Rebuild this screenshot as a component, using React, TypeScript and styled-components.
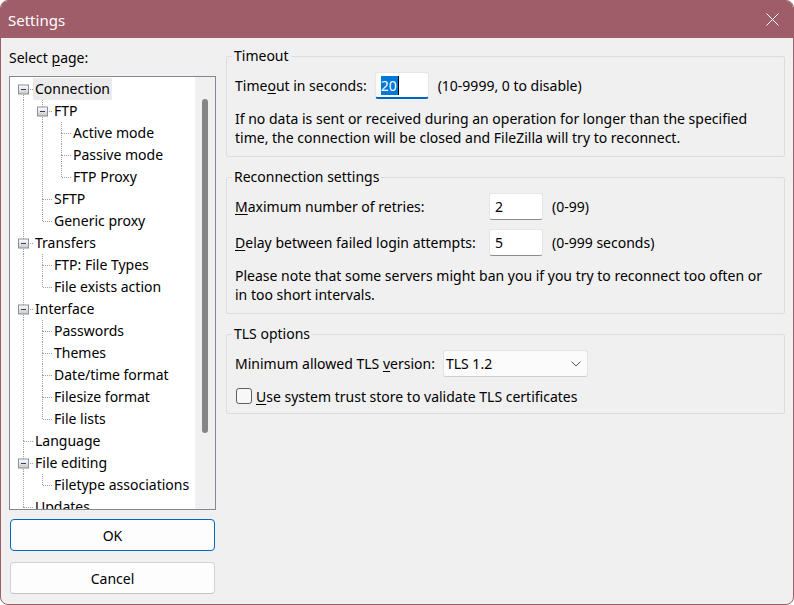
import React from 'react';
import styled, { createGlobalStyle } from 'styled-components';

const GlobalStyle = createGlobalStyle`
  html, body { margin: 0; padding: 0; background: #ffffff; }
  body {
    font-family: "Noto Sans", "DejaVu Sans", sans-serif;
    font-size: 14px;
    color: #000;
  }
  * { box-sizing: border-box; }
`;

const Window = styled.div`
  width: 794px;
  height: 605px;
  border: 1px solid #9f5d69;
  border-radius: 8px;
  overflow: hidden;
  background: #f0f0f0;
  display: flex;
  flex-direction: column;
`;

const TitleBar = styled.div`
  height: 37px;
  flex: none;
  background: #9f5d69;
  color: #fff;
  display: flex;
  align-items: center;
  justify-content: space-between;
  padding: 0 14px 0 7px;
  font-size: 15px;
`;

const CloseIcon = styled.svg`
  width: 13px;
  height: 13px;
  display: block;
`;

const Body = styled.div`
  flex: 1;
  display: flex;
  gap: 10px;
  padding: 9px 8px 10px 8px;
  min-height: 0;
`;

const LeftCol = styled.div`
  width: 207px;
  flex: none;
  display: flex;
  flex-direction: column;
  padding-top: 1px;
`;

const SelectLabel = styled.div`
  line-height: 20px;
  margin-bottom: 8px;
`;

const TreeBox = styled.div`
  flex: 1;
  min-height: 0;
  border: 1px solid #828790;
  background: #fff;
  display: flex;
  overflow: hidden;
  margin-bottom: 9px;
`;

const TreeList = styled.div`
  flex: 1;
  overflow: hidden;
  padding: 1px 0 0 4px;
`;

const ScrollTrack = styled.div`
  width: 20px;
  flex: none;
  background: #f0f0f0;
  padding: 22px 0 0 7px;
`;

const ScrollThumb = styled.div`
  width: 6px;
  height: 334px;
  border-radius: 3px;
  background: #858585;
`;

const TreeRow = styled.div`
  height: 22px;
  display: flex;
  align-items: center;
  white-space: nowrap;
`;

const TreeCell = styled.svg`
  width: 19px;
  height: 22px;
  flex: none;
  display: block;
`;

const TreeLabel = styled.span<{ $selected?: boolean }>`
  padding: 0 2px;
  line-height: 22px;
  background: ${(p) => (p.$selected ? '#ebebeb' : 'transparent')};
`;

const Button = styled.button<{ $default?: boolean }>`
  height: 32px;
  flex: none;
  margin: 0 1px;
  border-radius: 4px;
  border: 1px solid ${(p) => (p.$default ? '#0067c0' : '#d3d3d3')};
  border-bottom-color: ${(p) => (p.$default ? '#0067c0' : '#c2c2c2')};
  background: #fdfdfd;
  font-family: inherit;
  font-size: 14px;
  color: #000;
  padding: 0;
  & + & { margin-top: 11px; }
`;

const RightCol = styled.div`
  flex: 1;
  display: flex;
  flex-direction: column;
  gap: 11px;
  min-width: 0;
`;

const Group = styled.fieldset<{ $pb?: number }>`
  margin: 0;
  padding: 7px 8px ${(p) => p.$pb ?? 9}px 8px;
  border: 1px solid #dcdcdc;
  border-radius: 2px;
  min-width: 0;
`;

const Legend = styled.legend`
  padding: 0 2px;
  margin-left: -3px;
  line-height: 18px;
`;

const Row = styled.div`
  display: flex;
  align-items: center;
  gap: 8px;
  height: 27px;
`;

const FieldGrid = styled.div`
  display: grid;
  grid-template-columns: 246px 54px auto;
  grid-auto-rows: 27px;
  column-gap: 8px;
  row-gap: 9px;
  align-items: center;
  justify-content: start;
`;

const TextBox = styled.div<{ $focused?: boolean }>`
  width: 54px;
  height: 27px;
  background: #fff;
  border: 1px solid #e6e6e6;
  border-bottom: ${(p) => (p.$focused ? '2px solid #0067c0' : '1px solid #8c8c8c')};
  border-radius: 3px;
  padding-left: 5px;
  display: flex;
  align-items: center;
`;

const Selected = styled.span`
  background: #0078d7;
  color: #fff;
  line-height: 19px;
  padding: 0 1px 0 0;
`;

const Caret = styled.span`
  width: 1px;
  height: 19px;
  background: #000;
`;

const Hint = styled.span`
  padding-left: 1px;
`;

const Paragraph = styled.p`
  margin: 10px 0 0;
  line-height: 19px;
`;

const Select = styled.div`
  width: 145px;
  height: 27px;
  background: #fbfbfb;
  border: 1px solid #e3e3e3;
  border-bottom-color: #cfcfcf;
  border-radius: 3px;
  padding: 0 6px 0 2px;
  display: flex;
  align-items: center;
  justify-content: space-between;
`;

const Chevron = styled.svg`
  width: 10px;
  height: 6px;
  display: block;
`;

const CheckRow = styled.label`
  display: flex;
  align-items: center;
  gap: 4px;
  height: 20px;
  margin-top: 9px;
`;

const CheckBox = styled.span`
  width: 16px;
  height: 16px;
  margin-left: 1px;
  border: 1px solid #5f5f5f;
  border-radius: 3px;
  background: #f7f7f7;
`;

const Key = styled.span`
  text-decoration: underline;
  text-underline-offset: 2px;
`;

type Node = { label: string; selected?: boolean; children?: Node[] };

const tree: Node[] = [
  {
    label: 'Connection',
    selected: true,
    children: [
      { label: 'FTP', children: [{ label: 'Active mode' }, { label: 'Passive mode' }, { label: 'FTP Proxy' }] },
      { label: 'SFTP' },
      { label: 'Generic proxy' },
    ],
  },
  { label: 'Transfers', children: [{ label: 'FTP: File Types' }, { label: 'File exists action' }] },
  {
    label: 'Interface',
    children: [
      { label: 'Passwords' },
      { label: 'Themes' },
      { label: 'Date/time format' },
      { label: 'Filesize format' },
      { label: 'File lists' },
    ],
  },
  { label: 'Language' },
  { label: 'File editing', children: [{ label: 'Filetype associations' }] },
  { label: 'Updates' },
];

type Flat = {
  label: string;
  selected?: boolean;
  ancestors: boolean[];
  hasNext: boolean;
  hasChildren: boolean;
  firstRoot: boolean;
};

function flatten(nodes: Node[], ancestors: boolean[], out: Flat[], more = false) {
  nodes.forEach((n, i) => {
    const hasNext = i < nodes.length - 1 || (ancestors.length === 0 && more);
    out.push({
      label: n.label,
      selected: n.selected,
      ancestors,
      hasNext,
      hasChildren: !!n.children?.length,
      firstRoot: ancestors.length === 0 && i === 0,
    });
    if (n.children) flatten(n.children, [...ancestors, hasNext], out);
  });
  return out;
}

// The root list continues below the visible area (scrolled list).
const rows = flatten(tree, [], [], true);

const LINE = '#a0a0a0';

const AncestorCell: React.FC<{ line: boolean }> = ({ line }) => (
  <TreeCell viewBox="0 0 19 22">
    {line && <line x1="9.5" y1="0" x2="9.5" y2="22" stroke={LINE} strokeDasharray="1 1" />}
  </TreeCell>
);

const OwnCell: React.FC<{ row: Flat }> = ({ row }) => (
  <TreeCell viewBox="0 0 19 22">
    {!row.firstRoot && <line x1="9.5" y1="0" x2="9.5" y2="11" stroke={LINE} strokeDasharray="1 1" />}
    {row.hasNext && <line x1="9.5" y1="11" x2="9.5" y2="22" stroke={LINE} strokeDasharray="1 1" />}
    <line x1="10" y1="11.5" x2="19" y2="11.5" stroke={LINE} strokeDasharray="1 1" />
    {row.hasChildren && (
      <g>
        <defs>
          <linearGradient id="expg" x1="0" y1="0" x2="0" y2="1">
            <stop offset="0" stopColor="#ffffff" />
            <stop offset="1" stopColor="#c9c9c9" />
          </linearGradient>
        </defs>
        <rect x="4.5" y="7" width="10" height="9" fill="url(#expg)" stroke="#8e8f8f" />
        <line x1="7" y1="11.5" x2="12" y2="11.5" stroke="#2d3e78" />
      </g>
    )}
  </TreeCell>
);

export default function App() {
  return (
    <>
      <GlobalStyle />
      <Window>
        <TitleBar>
          <span>Settings</span>
          <CloseIcon viewBox="0 0 13 13">
            <path d="M0.5 0.5 L12.5 12.5 M12.5 0.5 L0.5 12.5" stroke="#fff" strokeWidth="1" />
          </CloseIcon>
        </TitleBar>
        <Body>
          <LeftCol>
            <SelectLabel>
              Select <Key>p</Key>age:
            </SelectLabel>
            <TreeBox>
              <TreeList>
                {rows.map((r, i) => (
                  <TreeRow key={i}>
                    {r.ancestors.map((a, j) => (
                      <AncestorCell key={j} line={a} />
                    ))}
                    <OwnCell row={r} />
                    <TreeLabel $selected={r.selected}>{r.label}</TreeLabel>
                  </TreeRow>
                ))}
              </TreeList>
              <ScrollTrack>
                <ScrollThumb />
              </ScrollTrack>
            </TreeBox>
            <Button $default>OK</Button>
            <Button>Cancel</Button>
          </LeftCol>
          <RightCol>
            <Group>
              <Legend>Timeout</Legend>
              <Row>
                <span>
                  Time<Key>o</Key>ut in seconds:
                </span>
                <TextBox $focused>
                  <Selected>20</Selected>
                  <Caret />
                </TextBox>
                <Hint>(10-9999, 0 to disable)</Hint>
              </Row>
              <Paragraph>
                If no data is sent or received during an operation for longer than the specified
                <br />
                time, the connection will be closed and FileZilla will try to reconnect.
              </Paragraph>
            </Group>
            <Group>
              <Legend>Reconnection settings</Legend>
              <FieldGrid>
                <span>
                  <Key>M</Key>aximum number of retries:
                </span>
                <TextBox>2</TextBox>
                <Hint>(0-99)</Hint>
                <span>
                  <Key>D</Key>elay between failed login attempts:
                </span>
                <TextBox>5</TextBox>
                <Hint>(0-999 seconds)</Hint>
              </FieldGrid>
              <Paragraph>
                Please note that some servers might ban you if you try to reconnect too often or
                <br />
                in too short intervals.
              </Paragraph>
            </Group>
            <Group $pb={7}>
              <Legend>TLS options</Legend>
              <Row>
                <span>
                  Minimum allowed TLS <Key>v</Key>ersion:
                </span>
                <Select>
                  <span>TLS 1.2</span>
                  <Chevron viewBox="0 0 10 6">
                    <path d="M0.5 0.5 L5 5 L9.5 0.5" fill="none" stroke="#5a5a5a" strokeWidth="1" />
                  </Chevron>
                </Select>
              </Row>
              <CheckRow>
                <CheckBox />
                <span>
                  <Key>U</Key>se system trust store to validate TLS certificates
                </span>
              </CheckRow>
            </Group>
          </RightCol>
        </Body>
      </Window>
    </>
  );
}
